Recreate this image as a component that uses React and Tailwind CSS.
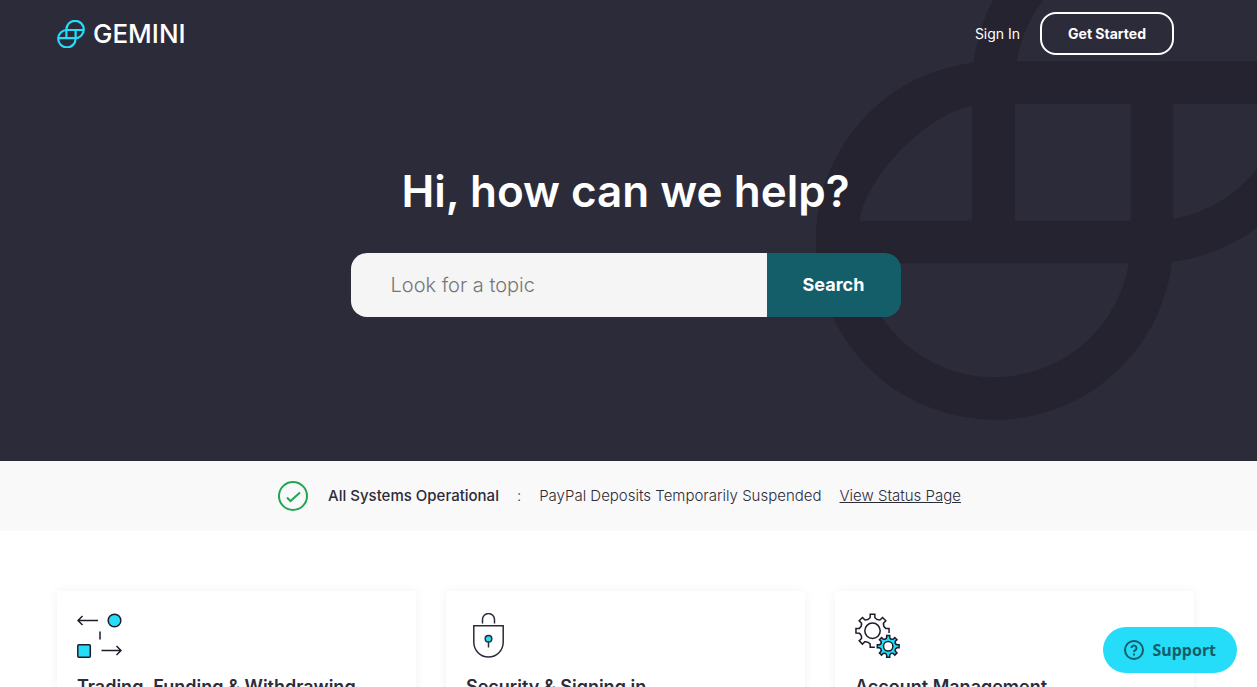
import React, { useState } from 'react';

// outline of a cog, one tooth every 45 degrees, going counter-clockwise from the right
const cogPath = (cx, cy, outer, root, teeth) => {
  const at = (r, deg) => {
    const rad = (deg * Math.PI) / 180;
    return `${(cx + r * Math.cos(rad)).toFixed(2)} ${(cy - r * Math.sin(rad)).toFixed(2)}`;
  };
  const parts = [];
  for (let i = 0; i < teeth; i++) {
    const a = i * 45;
    parts.push(`${i === 0 ? 'M' : 'L'}${at(outer, a - 8)}`);
    parts.push(`L${at(outer, a + 8)}`);
    if (i < teeth - 1 || teeth === 8) {
      parts.push(`L${at(root, a + 10)}`);
      parts.push(`Q${at(root - 2, a + 22.5)} ${at(root, a + 35)}`);
    }
  }
  return parts.join(' ') + (teeth === 8 ? 'Z' : '');
};

const TradingIcon = () => (
  <svg className="size-[45px]" viewBox="0 0 45 45" fill="none" stroke="#1e1c2b" strokeWidth="1.5" aria-hidden="true">
    <path d="M1.5 7.5H21M5.5 3 1 7.5 5.5 12M24.5 37.5H44M39.5 33 44 37.5 39.5 42M23 18.5V26.5" />
    <circle cx="37.5" cy="7.5" r="6.3" fill="#26ddf9" />
    <rect x="0.8" y="31.7" width="12.5" height="12.5" rx="1" fill="#26ddf9" />
  </svg>
);

const SecurityIcon = () => (
  <svg className="size-[45px]" viewBox="0 0 45 45" fill="none" stroke="#2c2b3a" strokeWidth="1.5" aria-hidden="true">
    <path d="M16.5 10.5V6.5a6 6 0 0 1 12 0v4" />
    <path d="M7.8 12.8h29.4v16.5a14.7 14.7 0 0 1-29.4 0z" />
    <circle cx="22.5" cy="25.8" r="3.3" fill="#26ddf9" />
    <path d="M22.5 29v5.5" />
  </svg>
);

const AccountIcon = () => (
  <svg className="size-[45px]" viewBox="0 0 45 45" fill="none" stroke="#1e1c2b" strokeWidth="1.5" aria-hidden="true">
    <path d={cogPath(17.5, 17.8, 16.7, 13.4, 7)} />
    <circle cx="17.5" cy="17.8" r="7.7" />
    <path d={cogPath(33.2, 33.3, 11, 8.8, 8)} fill="#26ddf9" />
    <circle cx="33.2" cy="33.3" r="4.7" fill="#fff" />
  </svg>
);

const topics = [
  { title: 'Trading, Funding & Withdrawing', icon: TradingIcon },
  { title: 'Security & Signing in', icon: SecurityIcon },
  { title: 'Account Management', icon: AccountIcon },
];

const Logo = () => (
  <a href="#home" className="flex items-center gap-2 text-white">
    <svg className="size-7" viewBox="0 0 28 28" fill="none" stroke="#26ddf9" strokeWidth="2.2" aria-hidden="true">
      <path d="M26.7 10H10a8.7 8.7 0 1 0 8.6 8.7V10" />
      <path d="M1.3 18.2H18a8.7 8.7 0 1 0-8.6-8.7v8.7" />
    </svg>
    <span className="text-[26px] leading-7 font-medium">GEMINI</span>
  </a>
);

const HeroMark = () => (
  <svg
    className="pointer-events-none absolute top-0 right-0 h-[461px] w-[441px]"
    viewBox="816 0 441 461"
    fill="none"
    stroke="#24232f"
    strokeWidth="42.5"
    aria-hidden="true"
  >
    <path d="M1308 82.5H994A157.5 158 0 1 0 1152 241V83" />
    <path d="M837 242H1152A157 158 0 1 0 993.5 84V242" />
    <path d="M859 221C866 177 928 112 973 106V90L845 150V221Z" fill="#24232f" stroke="none" />
  </svg>
);

const Hero = () => {
  const [query, setQuery] = useState('');

  return (
    <section className="relative overflow-hidden bg-[#2c2b3a] pb-36">
      <HeroMark />
      <header className="relative flex items-center justify-between pt-3 pr-[83px] pl-[57px]">
        <Logo />
        <nav className="flex items-center gap-5 text-sm text-white">
          <a href="#signin">Sign In</a>
          <a href="#start" className="rounded-2xl border-2 border-white px-[26px] py-[9px] leading-[21px] font-bold">
            Get Started
          </a>
        </nav>
      </header>
      <div className="relative flex flex-col items-center pt-[108px] pr-[63px] pl-[57px]">
        <h1 className="text-[44px] leading-[56px] font-semibold text-white">Hi, how can we help?</h1>
        <form className="mt-[34px] flex h-16 w-full max-w-[550px]" onSubmit={(e) => e.preventDefault()}>
          <input
            type="search"
            aria-label="Look for a topic"
            placeholder="Look for a topic"
            value={query}
            onChange={(e) => setQuery(e.target.value)}
            className="min-w-0 flex-1 rounded-l-2xl bg-[#f5f5f5] px-10 text-xl font-light text-[#2c2b3a] outline-none placeholder:text-[#757575]"
          />
          <button type="submit" className="w-[134px] rounded-r-2xl bg-[#145e69] text-lg font-bold text-white">
            Search
          </button>
        </form>
      </div>
    </section>
  );
};

const StatusBar = () => (
  <section className="flex min-h-[70px] items-center justify-center bg-[#f9f9f9] pr-[18px] text-[15px] font-light">
    <svg className="mr-5 size-[30px]" viewBox="0 0 30 30" fill="none" stroke="#1fa653" strokeWidth="2" aria-hidden="true">
      <circle cx="15" cy="15" r="14" />
      <path d="M9 16.5l3.5 3.5 9.5-8.5" />
    </svg>
    <strong className="font-medium">All Systems Operational</strong>
    <span className="mx-[18px]">:</span>
    <span>PayPal Deposits Temporarily Suspended</span>
    <a href="#status" className="ml-[18px] underline">View Status Page</a>
  </section>
);

const App = () => {
  return (
    <div className="min-h-screen bg-white font-[Inter,sans-serif] text-[#2c2b3a]">
      <Hero />
      <StatusBar />
      <main className="grid grid-cols-3 gap-[30px] pt-[60px] pr-[63px] pb-16 pl-[57px]">
        {topics.map(({ title, icon: Icon }) => (
          <a
            key={title}
            href="#topic"
            className="block bg-white px-5 pt-[22px] pb-6 shadow-[0_0_10px_rgba(0,0,0,0.05)]"
          >
            <Icon />
            <h2 className="mt-[17px] text-lg leading-6 font-semibold">{title}</h2>
          </a>
        ))}
      </main>
      <button
        type="button"
        className="fixed right-5 bottom-3.5 flex h-[46px] items-center gap-2 rounded-full bg-[#26ddf9] px-[21px] font-['Noto_Sans'] text-base font-bold text-[#145e69]"
      >
        <svg className="size-5" viewBox="0 0 20 20" fill="none" stroke="currentColor" strokeWidth="2" aria-hidden="true">
          <circle cx="10" cy="10" r="9" />
          <path d="M7.5 8a2.5 2.5 0 1 1 3.8 2.1c-.9.5-1.3.9-1.3 1.9M10 13.5v2" />
        </svg>
        Support
      </button>
    </div>
  );
};

export default App;
